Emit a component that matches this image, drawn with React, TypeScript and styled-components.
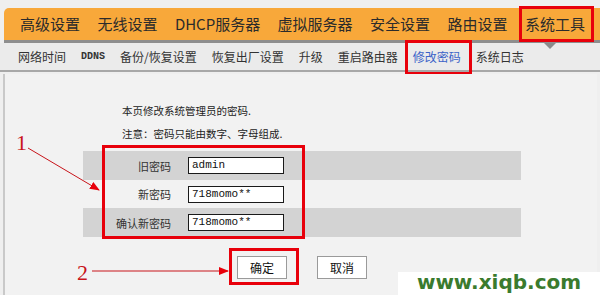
import styled, { createGlobalStyle } from "styled-components";

const GlobalStyle = createGlobalStyle`
  html, body {
    margin: 0;
    padding: 0;
    background: #f7f7f7;
  }
  body {
    width: 600px;
    height: 295px;
    overflow: hidden;
    font-family: "Noto Sans CJK SC", "Liberation Sans", sans-serif;
    color: #333;
  }
`;

const Page = styled.div`
  position: relative;
  width: 600px;
  height: 295px;
  background: #efefef;
  padding-top: 8px;
  box-sizing: border-box;
  display: flex;
  flex-direction: column;
`;

const MainNav = styled.nav`
  margin-left: 4px;
  height: 32px;
  background: #f8a83a;
  border-top-left-radius: 5px;
  border-bottom: 3px solid #8e8e8e;
  display: flex;
  align-items: center;
  justify-content: space-between;
  padding: 0 15px 0 16px;
`;

const MainItem = styled.span<{ $active?: boolean }>`
  position: relative;
  font-size: 15px;
  line-height: 32px;
  color: #2b2b2b;
  white-space: nowrap;

  ${({ $active }) =>
    $active &&
    `
    &::after {
      content: "";
      position: absolute;
      left: -6px;
      right: -9px;
      top: -2px;
      bottom: -2px;
      border: 3px solid #e8000b;
    }
    &::before {
      content: "";
      position: absolute;
      left: 19px;
      top: calc(100% + 3px);
      border-left: 6px solid transparent;
      border-right: 6px solid transparent;
      border-top: 6px solid #8a8a8a;
    }
  `}
`;

const SubNav = styled.nav`
  height: 27px;
  background: #ebebeb;
  border-bottom: 2px solid #a8a8a8;
  display: flex;
  align-items: center;
  gap: 15px;
  padding-left: 18px;
`;

const SubItem = styled.span<{ $active?: boolean; $latin?: boolean }>`
  position: relative;
  font-size: ${({ $latin }) => ($latin ? "10px" : "12px")};
  font-family: ${({ $latin }) =>
    $latin ? '"Liberation Mono", monospace' : '"Noto Sans CJK SC", sans-serif'};
  font-weight: ${({ $latin }) => ($latin ? 700 : 400)};
  color: ${({ $active }) => ($active ? "#3c63c8" : "#333")};
  white-space: nowrap;

  ${({ $active }) =>
    $active &&
    `
    &::after {
      content: "";
      position: absolute;
      left: -8px;
      right: -11px;
      top: -8px;
      bottom: -10px;
      border: 3px solid #e8000b;
    }
  `}
`;

const Content = styled.main`
  position: relative;
  margin: 2px 3px 0 3px;
  flex: 1;
  background: #f2f2f2;
  border-left: 2px solid #c9c9c9;
  padding: 30px 0 0 0;
`;

const Note = styled.p`
  margin: 0 0 9px 117px;
  font-size: 10.5px;
  line-height: 14px;
  color: #222;
`;

const Form = styled.div`
  position: relative;
  margin: 10px 0 0 78px;
  width: 438px;
`;

const Row = styled.div<{ $shaded?: boolean }>`
  height: ${({ $shaded }) => ($shaded ? "29px" : "28px")};
  background: ${({ $shaded }) => ($shaded ? "#d3d3d3" : "transparent")};
  display: flex;
  align-items: center;
`;

const Label = styled.span`
  width: 88px;
  text-align: right;
  font-size: 11px;
  color: #333;
`;

const Field = styled.div`
  margin-left: 17px;
  width: 96px;
  height: 17px;
  box-sizing: border-box;
  background: #fff;
  border: 1px solid #1a1a1a;
  font-family: "Liberation Mono", monospace;
  font-size: 11px;
  line-height: 15px;
  padding-left: 3px;
  color: #111;
`;

const Highlight = styled.div`
  position: absolute;
  left: 19px;
  top: -6px;
  width: 203px;
  height: 94px;
  box-sizing: border-box;
  border: 3px solid #e8000b;
  pointer-events: none;
`;

const Actions = styled.div`
  display: flex;
  gap: 30px;
  margin: 19px 0 0 232px;
`;

const Button = styled.div<{ $marked?: boolean }>`
  position: relative;
  width: 50px;
  height: 23px;
  box-sizing: border-box;
  background: #fff;
  border: 1px solid #9a9a9a;
  font-size: 12px;
  line-height: 21px;
  text-align: center;
  color: #111;

  ${({ $marked }) =>
    $marked &&
    `
    &::after {
      content: "";
      position: absolute;
      left: -9px;
      right: -13px;
      top: -9px;
      bottom: -7px;
      border: 3px solid #e8000b;
    }
  `}
`;

const Annotations = styled.svg`
  position: absolute;
  left: 0;
  top: 0;
  pointer-events: none;
`;

const Watermark = styled.div`
  position: absolute;
  right: 0;
  bottom: 0;
  width: 202px;
  height: 23px;
  background: #fff;
  text-align: center;
  font-family: "DejaVu Sans", sans-serif;
  font-weight: 700;
  font-size: 20px;
  line-height: 21px;
  color: #3a7b2e;
`;

const mainItems = ["高级设置", "无线设置", "DHCP服务器", "虚拟服务器", "安全设置", "路由设置", "系统工具"];
const subItems = ["网络时间", "DDNS", "备份/恢复设置", "恢复出厂设置", "升级", "重启路由器", "修改密码", "系统日志"];

const fields = [
  { label: "旧密码", value: "admin", shaded: true },
  { label: "新密码", value: "718momo**", shaded: false },
  { label: "确认新密码", value: "718momo**", shaded: true },
];

export default function App() {
  return (
    <>
      <GlobalStyle />
      <Page>
        <MainNav>
          {mainItems.map((item) => (
            <MainItem key={item} $active={item === "系统工具"}>
              {item}
            </MainItem>
          ))}
        </MainNav>
        <SubNav>
          {subItems.map((item) => (
            <SubItem key={item} $active={item === "修改密码"} $latin={item === "DDNS"}>
              {item}
            </SubItem>
          ))}
        </SubNav>
        <Content>
          <Note>本页修改系统管理员的密码.</Note>
          <Note>注意：密码只能由数字、字母组成.</Note>
          <Form>
            {fields.map((f) => (
              <Row key={f.label} $shaded={f.shaded}>
                <Label>{f.label}</Label>
                <Field>{f.value}</Field>
              </Row>
            ))}
            <Highlight />
          </Form>
          <Actions>
            <Button $marked>确定</Button>
            <Button>取消</Button>
          </Actions>
        </Content>
        <Annotations width="600" height="295" viewBox="0 0 600 295">
          <defs>
            <marker id="arrow" markerWidth="10" markerHeight="8" refX="9" refY="4" orient="auto" markerUnits="userSpaceOnUse">
              <path d="M0,0 L10,4 L0,8 Z" fill="#e8000b" />
            </marker>
          </defs>
          <text x="16" y="150" fill="#c8141a" fontFamily="Liberation Serif, serif" fontSize="22">1</text>
          <line x1="28" y1="148" x2="99" y2="190" stroke="#c8141a" strokeWidth="1" markerEnd="url(#arrow)" />
          <text x="77" y="280" fill="#c8141a" fontFamily="Liberation Serif, serif" fontSize="22">2</text>
          <line x1="92" y1="271" x2="228" y2="271" stroke="#c8141a" strokeWidth="1" markerEnd="url(#arrow)" />
        </Annotations>
        <Watermark>www.xiqb.com</Watermark>
      </Page>
    </>
  );
}
